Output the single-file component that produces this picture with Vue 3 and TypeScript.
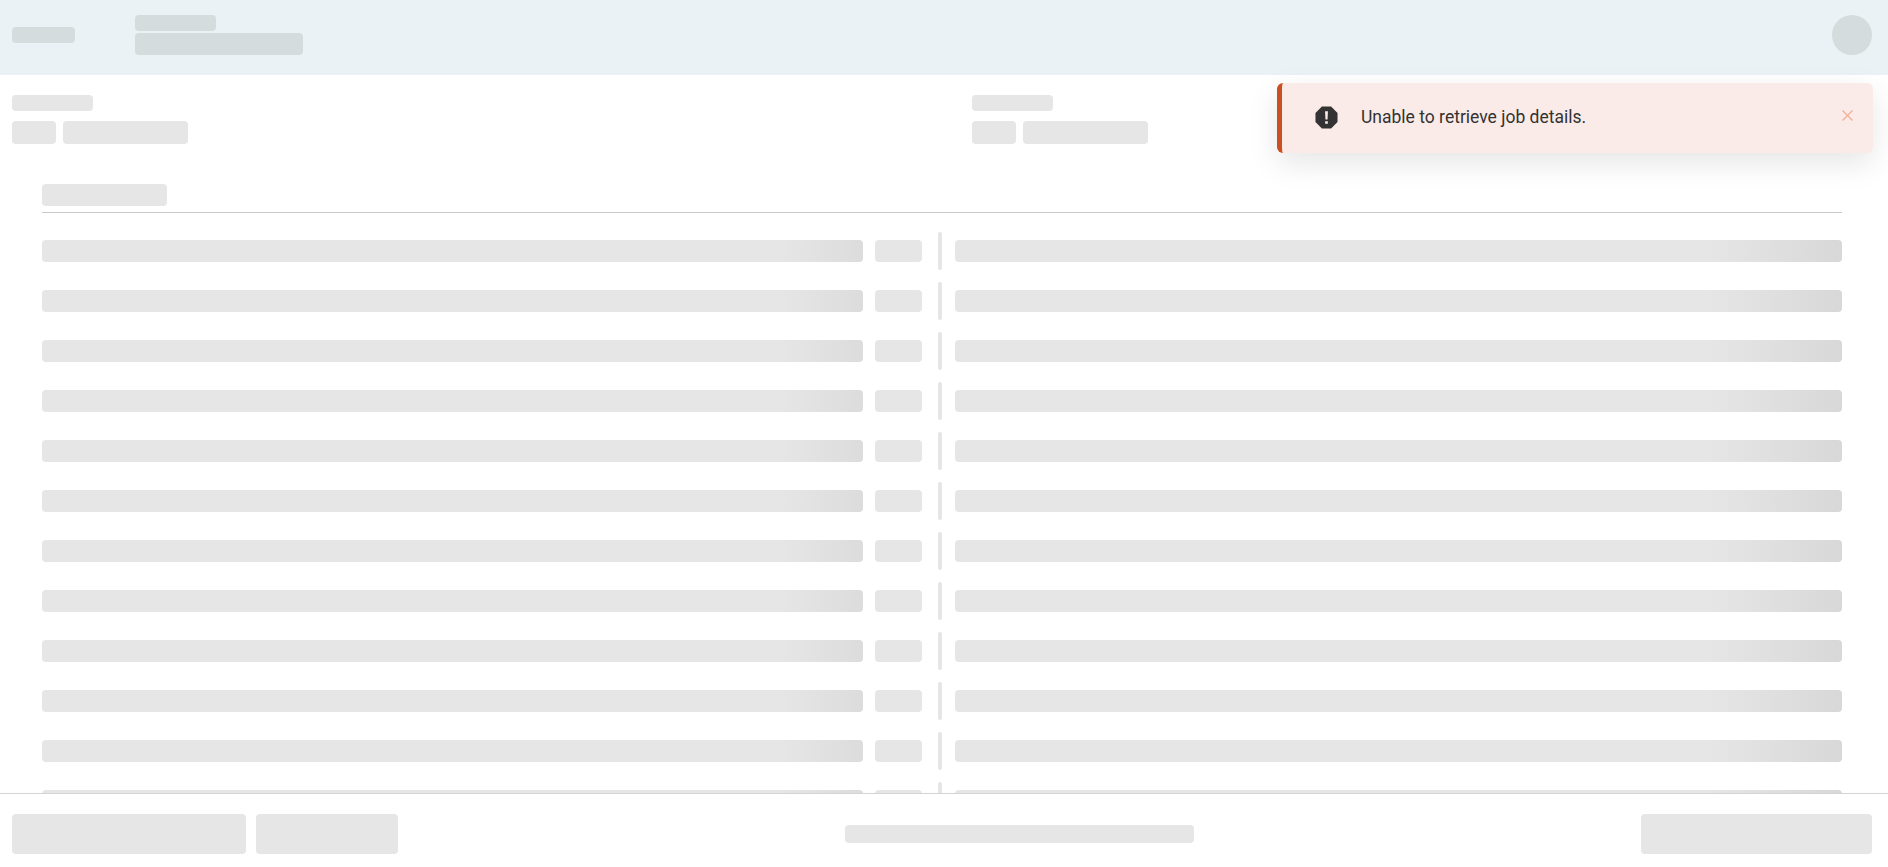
<template>
  <div class="page">
    <header class="top">
      <div class="sk-top top-logo"></div>
      <div class="top-title">
        <div class="sk-top top-title-a"></div>
        <div class="sk-top top-title-b"></div>
      </div>
      <div class="sk-top top-avatar"></div>
    </header>

    <main class="body">
      <div class="summary">
        <div v-for="n in 2" :key="n" class="summary-col">
          <div class="sk summary-label"></div>
          <div class="summary-chips">
            <div class="sk chip-a"></div>
            <div class="sk chip-b"></div>
          </div>
        </div>
      </div>

      <section class="details">
        <div class="details-head">
          <div class="sk details-title"></div>
        </div>
        <div v-for="n in rowCount" :key="n" class="row">
          <div class="sk row-name"></div>
          <div class="sk row-tag"></div>
          <div class="sk row-sep"></div>
          <div class="sk row-value"></div>
        </div>
      </section>
    </main>

    <footer class="bottom">
      <div class="bottom-left">
        <div class="sk btn-a"></div>
        <div class="sk btn-b"></div>
      </div>
      <div class="sk bottom-mid"></div>
      <div class="sk btn-c"></div>
    </footer>

    <div class="toast" role="alert">
      <svg class="toast-icon" viewBox="0 0 24 24" aria-hidden="true">
        <path
          fill-rule="evenodd"
          d="M7.2 0.5h9.6l6.7 6.7v9.6l-6.7 6.7H7.2L0.5 16.8V7.2zM10.5 5.5l0.4 8.5h2.2l0.4-8.5zM10.6 15.8v2.7h2.8v-2.7z"
        />
      </svg>
      <span class="toast-text">Unable to retrieve job details.</span>
      <svg class="toast-close" viewBox="0 0 11 11" aria-hidden="true">
        <path d="M0.5 0.5l10 10M10.5 0.5l-10 10" />
      </svg>
    </div>
  </div>
</template>

<script setup lang="ts">
const rowCount = 12
</script>

<style>
html,
body {
  margin: 0;
  background: #fff;
}
</style>

<style scoped>
.page {
  position: relative;
  display: flex;
  flex-direction: column;
  height: 867px;
  overflow: hidden;
  font-family: Roboto, "Liberation Sans", sans-serif;
}

.sk {
  background-color: #e6e6e6;
  border-radius: 4px;
}

.sk-top {
  background-color: #d5dcde;
  border-radius: 4px;
}

.top {
  display: flex;
  align-items: center;
  flex: none;
  height: 75px;
  padding: 0 16px 5px 12px;
  box-sizing: border-box;
  background: #eaf2f5;
}

.top-logo {
  width: 63px;
  height: 16px;
  margin-right: 60px;
}

.top-title {
  display: flex;
  flex-direction: column;
  gap: 2px;
  flex: 1;
}

.top-title-a {
  width: 81px;
  height: 16px;
}

.top-title-b {
  width: 168px;
  height: 22px;
}

.top-avatar {
  width: 40px;
  height: 40px;
  border-radius: 50%;
}

.body {
  flex: 1;
  min-height: 0;
  overflow: hidden;
}

.summary {
  display: grid;
  grid-template-columns: 960px 1fr;
  padding: 20px 12px 0;
}

.summary-col {
  display: flex;
  flex-direction: column;
  gap: 10px;
}

.summary-label {
  width: 81px;
  height: 16px;
}

.summary-chips {
  display: flex;
  gap: 7px;
}

.chip-a {
  width: 44px;
  height: 23px;
}

.chip-b {
  width: 125px;
  height: 23px;
}

.details {
  padding: 40px 46px 0 42px;
}

.details-head {
  padding-bottom: 6px;
  margin-bottom: 19px;
  border-bottom: 1px solid #c8c8c8;
}

.details-title {
  width: 125px;
  height: 22px;
}

.row {
  display: flex;
  align-items: center;
  height: 38px;
  margin-bottom: 12px;
}

.row-name {
  flex: none;
  width: 821px;
  height: 22px;
  background-image: linear-gradient(90deg, #e6e6e6 90%, #dcdcdc 100%);
}

.row-tag {
  flex: none;
  width: 47px;
  height: 22px;
  margin-left: 12px;
}

.row-sep {
  flex: none;
  width: 4px;
  height: 38px;
  margin-left: 16px;
  border-radius: 2px;
}

.row-value {
  flex: 1;
  height: 22px;
  margin-left: 13px;
  background-image: linear-gradient(90deg, #e6e6e6 85%, #d8d8d8 100%);
}

.bottom {
  display: flex;
  align-items: center;
  justify-content: space-between;
  flex: none;
  height: 74px;
  padding: 7px 16px 0 12px;
  box-sizing: border-box;
  background: #fff;
  border-top: 1px solid #d4d4d4;
}

.bottom-left {
  display: flex;
  gap: 10px;
}

.btn-a {
  width: 234px;
  height: 40px;
}

.btn-b {
  width: 142px;
  height: 40px;
}

.bottom-mid {
  width: 349px;
  height: 18px;
}

.btn-c {
  width: 231px;
  height: 40px;
}

.toast {
  position: absolute;
  top: 83px;
  right: 15px;
  display: flex;
  align-items: center;
  width: 596px;
  height: 70px;
  padding: 0 20px 0 33px;
  box-sizing: border-box;
  background: #faebe8;
  border-left: 5px solid #cc4e23;
  border-radius: 6px;
  box-shadow: 0 10px 30px rgba(0, 0, 0, 0.1);
}

.toast-icon {
  flex: none;
  width: 23px;
  height: 23px;
  margin: 0 23px 1px 0;
  fill: #333;
}

.toast-text {
  flex: 1;
  margin-bottom: 3px;
  font-size: 17.5px;
  color: #333;
}

.toast-close {
  flex: none;
  width: 11px;
  height: 11px;
  margin-bottom: 5px;
  fill: none;
  stroke: #f5b09a;
  stroke-width: 1.4;
}
</style>
